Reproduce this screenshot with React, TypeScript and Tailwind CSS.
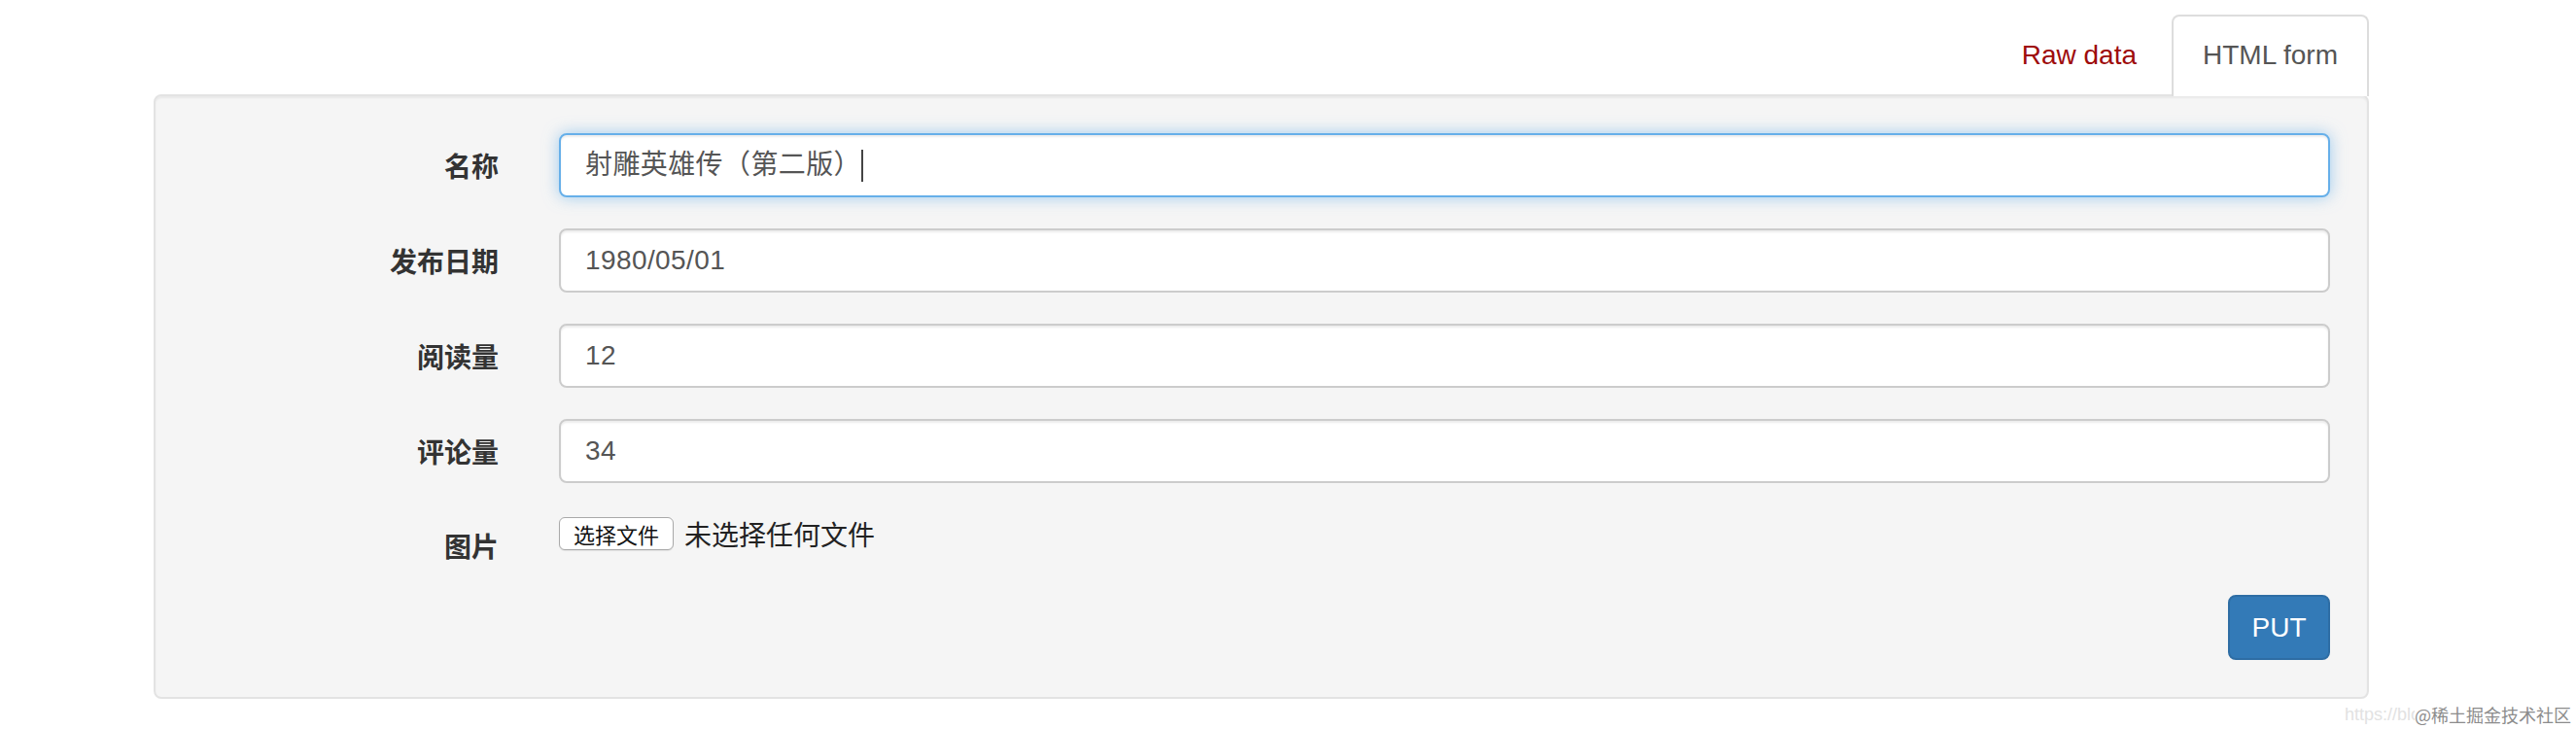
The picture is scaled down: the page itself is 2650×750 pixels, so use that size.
import React from "react";

const sans = '"Liberation Sans", "Noto Sans CJK SC", sans-serif';
const cjk = '"Noto Sans CJK SC", "Liberation Sans", sans-serif';

function Field({ value, focused, caret }: { value: string; focused?: boolean; caret?: boolean }) {
  return (
    <div
      className={
        "flex-1 h-[66px] flex items-center pl-[25px] rounded-[8px] bg-white border-2 text-[28px] text-[#555] " +
        (focused
          ? "border-[#66afe9] shadow-[inset_0_2px_2px_rgba(0,0,0,0.075),0_0_16px_rgba(102,175,233,0.6)]"
          : "border-[#ccc] shadow-[inset_0_2px_2px_rgba(0,0,0,0.075)]")
      }
      style={{ fontFamily: sans }}
    >
      <span className="whitespace-pre tracking-[0.4px]">{value}</span>
      {caret && <span className="inline-block w-[2px] h-[33px] bg-[#444]" />}
    </div>
  );
}

export default function App() {
  const rows = [
    { label: "名称", value: "射雕英雄传（第二版）", focused: true },
    { label: "发布日期", value: "1980/05/01" },
    { label: "阅读量", value: "12" },
    { label: "评论量", value: "34" },
  ];
  return (
    <div className="relative w-[2650px] h-[750px] bg-white overflow-hidden">
      <div className="ml-[158px] w-[2279px] pt-[15px]">
        {/* Tabs */}
        <div className="flex justify-end items-start h-[82px]">
          <a
            className="mr-[4px] px-[32px] pt-[22px] leading-[40px] text-[28px] text-[#9e0c0c]"
            style={{ fontFamily: sans }}
          >
            Raw data
          </a>
          <div
            className="relative z-10 h-[84px] px-[30px] pt-[20px] leading-[40px] text-[28px] text-[#555] bg-white border-2 border-b-0 border-[#ddd] rounded-t-[8px]"
            style={{ fontFamily: sans }}
          >
            HTML form
          </div>
        </div>

        {/* Panel */}
        <div className="border-2 border-[#e3e3e3] bg-[#f5f5f5] rounded-[8px] p-[38px] shadow-[inset_0_2px_2px_rgba(0,0,0,0.05)]">
          {rows.map((r, i) => (
            <div key={i} className="flex mb-[32px]">
              <div
                className="w-[315px] shrink-0 flex items-center justify-end h-[66px] text-[28px] font-bold text-[#333]"
                style={{ fontFamily: cjk }}
              >
                {r.label}
              </div>
              <div className="ml-[62px] flex-1 flex">
                <Field value={r.value} focused={r.focused} caret={r.focused} />
              </div>
            </div>
          ))}

          {/* File row */}
          <div className="flex mb-[29px]">
            <div
              className="w-[315px] shrink-0 text-right text-[28px] leading-[40px] font-bold text-[#333] pt-[12px] pb-[2px]"
              style={{ fontFamily: cjk }}
            >
              图片
            </div>
            <div className="ml-[62px] flex-1 flex items-center h-[40px]">
              <div
                className="w-[118px] h-[34px] flex items-center justify-center bg-white border border-[#a9a9a9] rounded-[6px] text-[22px] text-[#111] shadow-[0_1px_1px_rgba(0,0,0,0.08)]"
                style={{ fontFamily: cjk }}
              >
                选择文件
              </div>
              <span className="ml-[11px] text-[28px] text-[#222]" style={{ fontFamily: cjk }}>
                未选择任何文件
              </span>
            </div>
          </div>

          {/* PUT */}
          <div className="flex justify-end">
            <button
              className="w-[105px] h-[67px] rounded-[8px] bg-[#337ab7] border-2 border-[#2e6da4] text-white text-[28px]"
              style={{ fontFamily: sans }}
            >
              PUT
            </button>
          </div>
        </div>
      </div>

      {/* Watermark */}
      <div className="absolute left-[2412px] top-[723px] h-[24px] flex items-center whitespace-nowrap">
        <span className="inline-block w-[72px] overflow-hidden text-[18px] text-[#e2e2e2]" style={{ fontFamily: sans }}>
          https://blog
        </span>
        <span className="text-[18px] text-[#8c8c8c]" style={{ fontFamily: cjk }}>
          @稀土掘金技术社区
        </span>
      </div>
    </div>
  );
}
